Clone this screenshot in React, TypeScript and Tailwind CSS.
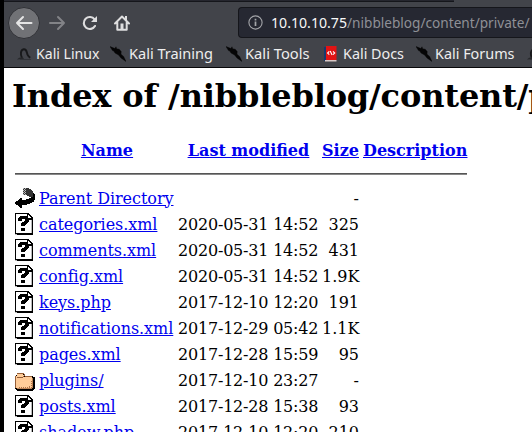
import React from "react";

type Kind = "back" | "unknown" | "folder";
type Entry = { kind: Kind; name: string; date: string; size: string };

const entries: Entry[] = [
  { kind: "back", name: "Parent Directory", date: "", size: "-" },
  { kind: "unknown", name: "categories.xml", date: "2020-05-31 14:52", size: "325" },
  { kind: "unknown", name: "comments.xml", date: "2020-05-31 14:52", size: "431" },
  { kind: "unknown", name: "config.xml", date: "2020-05-31 14:52", size: "1.9K" },
  { kind: "unknown", name: "keys.php", date: "2017-12-10 12:20", size: "191" },
  { kind: "unknown", name: "notifications.xml", date: "2017-12-29 05:42", size: "1.1K" },
  { kind: "unknown", name: "pages.xml", date: "2017-12-28 15:59", size: "95" },
  { kind: "folder", name: "plugins/", date: "2017-12-10 23:27", size: "-" },
  { kind: "unknown", name: "posts.xml", date: "2017-12-28 15:38", size: "93" },
  { kind: "unknown", name: "shadow.php", date: "2017-12-10 12:20", size: "210" },
];

function FileIcon({ kind }: { kind: Kind }) {
  return (
    <svg width="20" height="22" viewBox="0 0 20 22" shapeRendering="crispEdges" className="block">
      {kind === "unknown" && (
        <>
          <path d="M0 0h13l5 5v17H2v-1H0z" fill="#000" />
          <path d="M1 1h11v5h5v14H1z" fill="#fff" />
          <path d="M13 2h1v1h1v1h1v1h-3z" fill="#fff" />
          <path d="M16 7h1v13h-1zM0 21h2v1H0z" fill="#bbb" />
          <path d="M5 3h7v1h1v1h4v2h-3v2h-1v1h-1v1h-1v1h-1v1H6v-3h1V9h2V8h1V6H7v2H3V5h1V4h1zM6 15h4v3H6z" fill="#000" />
        </>
      )}
      {kind === "back" && (
        <>
          <path d="M8 1h6v1h2v1h1v1h1v2h1v5h-3v-1h-2V9H8z" fill="#333" />
          <path d="M8 1.5h1M10 1.5h1M9 2.5h1M8 3.5h1M10 3.5h1M9 4.5h1M8 5.5h1M10 5.5h1M9 6.5h1M8 7.5h1M10 7.5h1" stroke="#bbb" />
          <path d="M8 8h4v1H8z" fill="#fff" />
          <path d="M0 15h1v-1h2v-1h1v-1h1v-1h2v2h4v-1h3v-1h2v-1h2V6h1v1h1v6h-1v2h-2v1h-2v1h-3v1H7v3H5v-1H4v-1H3v-1H1v-1H0z" fill="#000" />
        </>
      )}
      {kind === "folder" && (
        <>
          <path d="M2 5h7v1h1v1h8v1h2v12h-1v1h-1v1H2v-1H1v-1H0V7h1V6h1z" fill="#000" />
          <path d="M2 5h6v1h1v2h8v1h1v10h-1v1H2v-1H1V7h1z" fill="#fc9" />
          <path d="M0 7h1v12H0zM2 4h7v1H2zM9 5h1v2H9zM10 7h7v1h-7zM2 8h6v1H2zM8 7h1v1H8z" fill="#965f38" />
          <path d="M17 9h1v10h-1zM2 19h15v1H2z" fill="#bd8356" />
          <path d="M14 17.5h1M12 18.5h1M14 18.5h1M16 16.5h1M16 14.5h1M16 12.5h1M16 18.5h1M10 18.5h1M8 18.5h1M6 18.5h1M4 18.5h1" stroke="#ad7146" />
        </>
      )}
    </svg>
  );
}

function KaliIcon() {
  return (
    <svg width="16" height="16" viewBox="0 0 16 16" className="block">
      <path d="M0 .5 5 2.6 6 .8l.6 2 2.6.4 2 2.4-.2 2.6 2.6 2.2L16 15.5 11 12 8.6 9 5 7 3.8 5 2.5 4.6z" fill="#050506" stroke="#050506" strokeWidth=".4" />
    </svg>
  );
}

function DragonIcon() {
  return (
    <svg width="16" height="16" viewBox="0 0 16 16" className="block shrink-0">
      <path
        d="M5 12C3.2 8.5 3.4 4 6.8 3.3 10.4 3 9.4 7.5 11 9.5c.6.9 1.4 1.6 2.2 2.2"
        fill="none"
        stroke="#18191b"
        strokeWidth="1.9"
      />
      <path d="M0 13.5C2 11.5 4 11 6 11.5l1 1.5z" fill="#26272a" />
      <path d="M3 13.5h11" stroke="#303237" />
    </svg>
  );
}

function DocsIcon() {
  return (
    <svg width="14" height="16" viewBox="0 0 14 16" className="block">
      <path d="M0 1h2v14H0z" fill="#173970" />
      <path d="M2 0h10.5v14H2z" fill="#e11414" />
      <path d="M1 14h11.5v1.5H1z" fill="#d9c9c7" />
      <path d="M5.3 5.4 3.6 7l1.7 1.6M9 5.4 10.7 7 9 8.6M6.2 5l1.9 4" fill="none" stroke="#fff" strokeWidth="1.1" />
    </svg>
  );
}

type BookmarkProps = { icon: React.ReactNode; label: string; textWidth: number; className: string };

function Bookmark({ icon, label, textWidth, className }: BookmarkProps) {
  return (
    <div className={`flex shrink-0 items-center ${className}`}>
      <span className="w-[19px] shrink-0">{icon}</span>
      <svg width={textWidth + 2} height="24" className="block shrink-0 overflow-visible" fontSize="15" fontFamily="'Noto Sans', sans-serif">
        <text x="0" y="17" fill="#eeeeee" textLength={textWidth} lengthAdjust="spacingAndGlyphs">
          {label}
        </text>
      </svg>
    </div>
  );
}

function Toolbar() {
  return (
    <div className="flex h-[43px] items-center">
      <div className="-mt-px ml-[4px] flex size-[32px] shrink-0 items-center justify-center rounded-full border border-[#303136] bg-[#717276]">
        <svg width="18" height="16" viewBox="0 0 18 16" fill="none" stroke="#e5e5e5" strokeWidth="2" strokeLinecap="round" strokeLinejoin="round">
          <path d="M16.5 8H2M8 2 2 8l6 6" />
        </svg>
      </div>
      <svg className="-mt-px ml-[8px] shrink-0" width="18" height="16" viewBox="0 0 18 16" fill="none" stroke="#828387" strokeWidth="2" strokeLinecap="round" strokeLinejoin="round">
        <path d="M2 8h14M10 2l6 6-6 6" />
      </svg>
      <svg className="-mt-px ml-[15px] shrink-0" width="18" height="16" viewBox="0 0 18 16" fill="none" stroke="#dededf" strokeWidth="2.1" strokeLinecap="round">
        <path d="M13.6 4.4A6 6 0 1 0 14 11" />
        <path d="M16 1v6h-6z" fill="#dededf" stroke="none" />
      </svg>
      <svg className="-mt-[2px] ml-[14px] shrink-0" width="18" height="18" viewBox="0 0 18 18">
        <path d="M2 9.5 9 2.5l7 7M4.3 8.5v7.3h9.4V8.5" fill="none" stroke="#dededf" strokeWidth="2" strokeLinecap="round" strokeLinejoin="round" />
        <path d="M12 2h2v5h-2zM7.5 9.5h3V16h-3z" fill="#dededf" />
      </svg>
      <div className="-mt-[2px] ml-[107px] flex h-[31px] flex-1 items-center rounded-l-[4px] border border-r-0 border-[#15161b] bg-[#262832]">
        <svg className="ml-[9px] shrink-0" width="15" height="15" viewBox="0 0 15 15" fill="none" stroke="#a4a5a9">
          <circle cx="7.5" cy="7.5" r="6.6" strokeWidth="1.1" />
          <path d="M7.5 6.5V11M7.5 3.7v1.7" strokeWidth="1.7" />
        </svg>
        <svg className="ml-[8px] block shrink-0 overflow-visible" width="76" height="28" fontSize="15" fontFamily="'Noto Sans', sans-serif">
          <text x="0" y="19" fill="#f8f8f8" textLength="76" lengthAdjust="spacingAndGlyphs">10.10.10.75</text>
        </svg>
        <svg className="block shrink-0 overflow-visible" width="184" height="28" fontSize="15" fontFamily="'Noto Sans', sans-serif">
          <text x="0" y="19" fill="#8f9096" textLength="182.5" lengthAdjust="spacingAndGlyphs">/nibbleblog/content/private/</text>
        </svg>
      </div>
    </div>
  );
}

export default function App() {
  return (
    <div className="flex h-[432px] w-[532px] flex-col overflow-hidden bg-white">
      <div className="flex min-h-0 flex-1 border-l-4 border-black">
        <div className="flex w-[528px] shrink-0 flex-col overflow-hidden">
          <header className="h-[68px] shrink-0 overflow-hidden border-b border-[#08080a] bg-[#42444a]">
            <div className="h-[2px] w-[450px] border-b border-[#15161b] bg-[#25262e]" />
            <Toolbar />
            <nav className="-mt-[3px] flex h-[24px] items-center">
              <Bookmark className="ml-[13px] w-[93px]" icon={<DragonIcon />} label="Kali Linux" textWidth={63.5} />
              <Bookmark className="w-[115.5px]" icon={<KaliIcon />} label="Kali Training" textWidth={84} />
              <Bookmark className="w-[98px]" icon={<KaliIcon />} label="Kali Tools" textWidth={64.5} />
              <Bookmark className="w-[92px]" icon={<DocsIcon />} label="Kali Docs" textWidth={61} />
              <Bookmark className="w-[111.5px]" icon={<KaliIcon />} label="Kali Forums" textWidth={79.5} />
              <DragonIcon />
            </nav>
          </header>
          <main className="pl-[8px] text-[16px] leading-[19px] text-black [font-family:'DejaVu_Serif',serif]">
            <h1 className="mt-[9px] h-[38px] text-[32px] leading-[38px] font-bold tracking-[-0.15px] whitespace-nowrap">Index of /nibbleblog/content/private</h1>
            <section className="ml-[3px] w-[452px]">
              <div className="mt-[26px] grid h-[19px] grid-cols-[20px_136px_139px_37px_104px] gap-x-[4px] text-center font-bold whitespace-nowrap text-[#0000ee] underline">
                <span />
                <a>Name</a>
                <a>Last modified</a>
                <a>Size</a>
                <a>Description</a>
              </div>
              <div className="mt-[13px] h-[2px] border-t border-[#555] bg-[#888]" />
              <div className="mt-[12px] flex flex-col gap-[4px]">
                {entries.map((e) => (
                  <div key={e.name} className="grid h-[22px] grid-cols-[20px_135px_140px_37px] items-center gap-x-[4px] whitespace-nowrap">
                    <FileIcon kind={e.kind} />
                    <a className="tracking-[-0.05px] text-[#0000ee] underline">{e.name}</a>
                    <span className="tracking-[-0.2px]">{e.date}</span>
                    <span className="text-right">{e.size}</span>
                  </div>
                ))}
              </div>
            </section>
          </main>
        </div>
      </div>
    </div>
  );
}
